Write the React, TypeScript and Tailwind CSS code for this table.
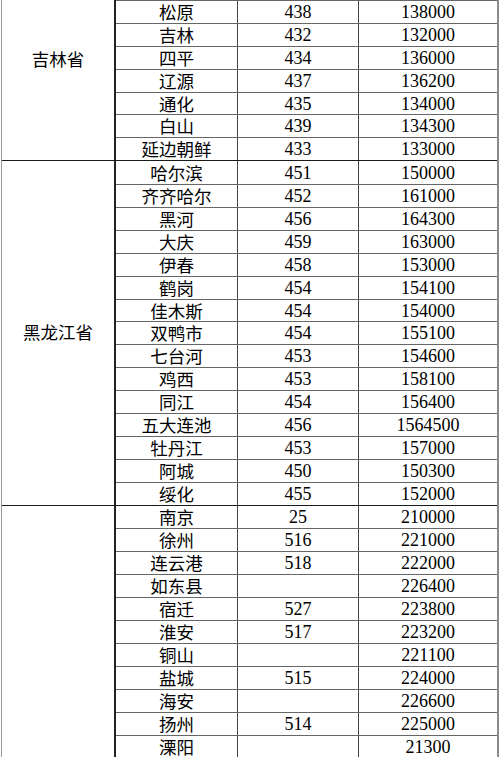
const groups = [
  {
    name: "吉林省",
    labelPad: "pt-[48px]",
    rows: [
      ["松原", "438", "138000"],
      ["吉林", "432", "132000"],
      ["四平", "434", "136000"],
      ["辽源", "437", "136200"],
      ["通化", "435", "134000"],
      ["白山", "439", "134300"],
      ["延边朝鲜", "433", "133000"],
    ],
  },
  {
    name: "黑龙江省",
    labelPad: "pt-[160px]",
    rows: [
      ["哈尔滨", "451", "150000"],
      ["齐齐哈尔", "452", "161000"],
      ["黑河", "456", "164300"],
      ["大庆", "459", "163000"],
      ["伊春", "458", "153000"],
      ["鹤岗", "454", "154100"],
      ["佳木斯", "454", "154000"],
      ["双鸭市", "454", "155100"],
      ["七台河", "453", "154600"],
      ["鸡西", "453", "158100"],
      ["同江", "454", "156400"],
      ["五大连池", "456", "1564500"],
      ["牡丹江", "453", "157000"],
      ["阿城", "450", "150300"],
      ["绥化", "455", "152000"],
    ],
  },
  {
    name: "",
    labelPad: "",
    rows: [
      ["南京", "25", "210000"],
      ["徐州", "516", "221000"],
      ["连云港", "518", "222000"],
      ["如东县", "", "226400"],
      ["宿迁", "527", "223800"],
      ["淮安", "517", "223200"],
      ["铜山", "", "221100"],
      ["盐城", "515", "224000"],
      ["海安", "", "226600"],
      ["扬州", "514", "225000"],
      ["溧阳", "", "21300"],
    ],
  },
];

const cjk = "font-['Noto_Sans_CJK_SC',sans-serif]";
const num = "font-['Liberation_Serif','Noto_Sans_CJK_SC',serif] text-[18px]";

export default function App() {
  return (
    <div className="w-[500px] h-[757px] overflow-hidden bg-white text-black text-[17.5px] leading-[22px]">
      <div className="ml-px w-[498px] border-l border-r-2 border-b border-l-[#9a9a9a] border-r-[#8a8a8a] border-b-[#555]">
        {groups.map((g, gi) => (
          <div
            key={gi}
            className={`flex ${gi > 0 ? "border-t-[1.5px] border-t-[#1a1a1a]" : ""}`}
          >
            <div className={`w-[114px] shrink-0 border-r-2 border-r-[#222] text-center ${g.labelPad} ${cjk}`}>
              {g.name}
            </div>
            <div className="flex-1 flex flex-col">
              {g.rows.map((r, ri) => (
                <div
                  key={ri}
                  className={`grid grid-cols-[122px_121px_1fr] h-[22.9px] items-center ${
                    gi === 0 || ri > 0 ? "border-t border-t-[#666]" : ""
                  }`}
                >
                  <div className={`h-full flex items-center justify-center border-r border-r-[#444] ${cjk}`}>
                    {r[0]}
                  </div>
                  <div className={`h-full flex items-center justify-center border-r border-r-[#444] ${num}`}>
                    {r[1]}
                  </div>
                  <div className={`h-full flex items-center justify-center ${num}`}>{r[2]}</div>
                </div>
              ))}
            </div>
          </div>
        ))}
      </div>
    </div>
  );
}
